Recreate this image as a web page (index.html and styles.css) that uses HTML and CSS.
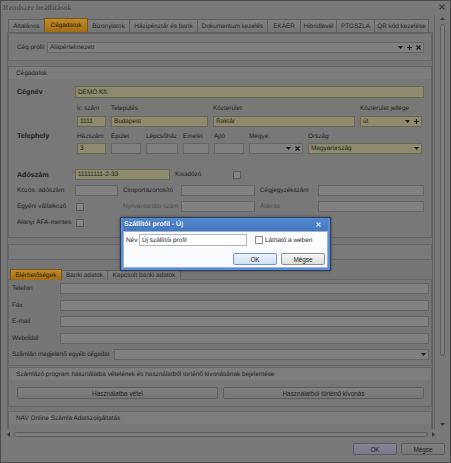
FILE: index.html
```html
<!DOCTYPE html>
<html lang="hu">
<head>
<meta charset="utf-8">
<title>Rendszer beállítások</title>
<link rel="stylesheet" href="styles.css">
</head>
<body>
<div class="window">
  <div class="titlebar">
    <span class="title">Rendszer beállítások</span>
    <svg class="wclose" viewBox="0 0 6 6" width="6" height="6"><path d="M0.6 0.6L5.4 5.4M5.4 0.6L0.6 5.4" stroke="#3a3a3a" stroke-width="1.3"/></svg>
  </div>
  <div class="main">
    <div class="viewport">
      <div class="tabs maintabs">
        <div class="tab t-alt">Általános</div>
        <div class="tab t-ceg active">Cégadatok</div>
        <div class="tab t-biz">Bizonylatok</div>
        <div class="tab t-haz">Házipénztár és bank</div>
        <div class="tab t-dok">Dokumentum kezelés</div>
        <div class="tab t-eka">EKÁER</div>
        <div class="tab t-hib">Hibridlevél</div>
        <div class="tab t-ptg">PTGSZLA</div>
        <div class="tab t-qr">QR kód kezelése</div>
      </div>
      <div class="tabpage">
        <div class="panel profil">
          <span class="lbl w30">Cég profil</span>
          <div class="field combo grow">
            <span>Alapértelmezett</span>
            <span class="icons">
              <svg class="ico" viewBox="0 0 5 3" width="5" height="3"><path d="M0 0H5L2.5 3z" fill="#1c1c1c"/></svg>
              <svg class="ico" viewBox="0 0 5 5" width="5" height="5"><path d="M1.9 0h1.2v1.9H5v1.2H3.1V5H1.9V3.1H0V1.9h1.9z" fill="#1c1c1c"/></svg>
              <svg class="ico" viewBox="0 0 5 5" width="5" height="5"><path d="M0.5 0.5L4.5 4.5M4.5 0.5L0.5 4.5" stroke="#1c1c1c" stroke-width="1.3"/></svg>
            </span>
          </div>
        </div>

        <div class="group ceg">
          <div class="ghead">Cégadatok</div>
          <div class="gbody">
            <div class="row cegnev">
              <span class="lbl b w58">Cégnév</span>
              <div class="field y grow">DEMÓ Kft.</div>
            </div>

            <div class="telephely">
              <span class="lbl b w60 tlbl">Telephely</span>
              <div class="addr">
                <div class="arow">
                  <div class="col c-ir"><span class="clbl">Ir. szám</span><div class="field y">1111</div></div>
                  <div class="col c-tel"><span class="clbl">Település</span><div class="field y">Budapest</div></div>
                  <div class="col c-koz"><span class="clbl">Közterület</span><div class="field y">Raktár</div></div>
                  <div class="col c-kj"><span class="clbl">Közterület jellege</span>
                    <div class="field y combo"><span>út</span><span class="icons">
                      <svg class="ico" viewBox="0 0 5 3" width="5" height="3"><path d="M0 0H5L2.5 3z" fill="#1c1c1c"/></svg>
                      <svg class="ico" viewBox="0 0 5 5" width="5" height="5"><path d="M1.9 0h1.2v1.9H5v1.2H3.1V5H1.9V3.1H0V1.9h1.9z" fill="#1c1c1c"/></svg>
                    </span></div>
                  </div>
                </div>
                <div class="arow brow">
                  <div class="col c-ir"><span class="clbl">Házszám</span><div class="field y">3</div></div>
                  <div class="col c-ep"><span class="clbl">Épület</span><div class="field"></div></div>
                  <div class="col c-lh"><span class="clbl">Lépcsőház</span><div class="field"></div></div>
                  <div class="col c-em"><span class="clbl">Emelet</span><div class="field"></div></div>
                  <div class="col c-aj"><span class="clbl">Ajtó</span><div class="field"></div></div>
                  <div class="col c-me"><span class="clbl">Megye</span>
                    <div class="field combo"><span></span><span class="icons">
                      <svg class="ico" viewBox="0 0 5 3" width="5" height="3"><path d="M0 0H5L2.5 3z" fill="#1c1c1c"/></svg>
                      <svg class="ico" viewBox="0 0 5 5" width="5" height="5"><path d="M0.5 0.5L4.5 4.5M4.5 0.5L0.5 4.5" stroke="#1c1c1c" stroke-width="1.3"/></svg>
                    </span></div>
                  </div>
                  <div class="col c-or"><span class="clbl">Ország</span>
                    <div class="field y combo"><span>Magyarország</span><span class="icons">
                      <svg class="ico" viewBox="0 0 5 3" width="5" height="3"><path d="M0 0H5L2.5 3z" fill="#1c1c1c"/></svg>
                    </span></div>
                  </div>
                </div>
              </div>
            </div>

            <div class="row adoszam">
              <span class="lbl b w58">Adószám</span>
              <div class="field y f-ado">11111111-2-33</div>
              <span class="lbl w58 ml5">Kisadózó</span>
              <span class="chk"></span>
            </div>

            <div class="extra">
              <span class="lbl">Közös. adószám</span>
              <div class="field"></div>
              <span></span>
              <span class="lbl">Csoportazonosító</span>
              <div class="field"></div>
              <span></span>
              <span class="lbl">Cégjegyzékszám</span>
              <div class="field"></div>

              <span class="lbl">Egyéni vállalkozó</span>
              <span class="chkcell"><span class="chk"></span></span>
              <span></span>
              <span class="lbl dis">Nyilvántartási szám</span>
              <div class="field"></div>
              <span></span>
              <span class="lbl dis">Aláírás</span>
              <div class="field"></div>

              <span class="lbl">Alanyi ÁFA-mentes</span>
              <span class="chkcell"><span class="chk"></span></span>
            </div>
          </div>
        </div>

        <div class="panel empty"></div>

        <div class="tabs subtabs">
          <div class="tab s-ele active">Elérhetőségek</div>
          <div class="tab s-ban">Banki adatok</div>
          <div class="tab s-kap">Kapcsolt banki adatok</div>
        </div>
        <div class="subpage">
          <div class="crow"><span class="lbl w48">Telefon</span><div class="field grow"></div></div>
          <div class="crow"><span class="lbl w48">Fax</span><div class="field grow"></div></div>
          <div class="crow"><span class="lbl w48">E-mail</span><div class="field grow"></div></div>
          <div class="crow"><span class="lbl w48">Weboldal</span><div class="field grow"></div></div>
          <div class="crow"><span class="lbl w102">Számlán megjelenő egyéb cégadat</span>
            <div class="field combo grow"><span></span><span class="icons">
              <svg class="ico" viewBox="0 0 5 3" width="5" height="3"><path d="M0 0H5L2.5 3z" fill="#1c1c1c"/></svg>
            </span></div>
          </div>
        </div>

        <div class="group szamlazo">
          <div class="ghead">Számlázó program használatba vételének és használatból történő kivonásának bejelentése</div>
          <div class="gbody btnrow">
            <button class="btn">Használatba vétel</button>
            <button class="btn">Használatból történő kivonás</button>
          </div>
        </div>

        <div class="group nav">
          <div class="ghead">NAV Online Számla Adatszolgáltatás</div>
          <div class="gbody navbody"></div>
        </div>
      </div>
    </div>
    <div class="vscroll">
      <svg class="sarrow" viewBox="0 0 5 3" width="5" height="3"><path d="M0 3H5L2.5 0z" fill="#3a3a3a"/></svg>
      <div class="vthumb"></div>
      <svg class="sarrow down" viewBox="0 0 5 3" width="5" height="3"><path d="M0 0H5L2.5 3z" fill="#3a3a3a"/></svg>
    </div>
  </div>
  <div class="hscroll">
    <svg class="harrow" viewBox="0 0 3 5" width="3" height="5"><path d="M3 0V5L0 2.5z" fill="#3a3a3a"/></svg>
    <div class="hthumb"></div>
    <svg class="harrow" viewBox="0 0 3 5" width="3" height="5"><path d="M0 0V5L3 2.5z" fill="#3a3a3a"/></svg>
  </div>
  <div class="bottombar">
    <button class="btn ok">OK</button>
    <button class="btn">Mégse</button>
  </div>
</div>

<div class="dialog">
  <div class="dtitle">
    <span>Szállítói profil - Új</span>
    <svg class="dclose" viewBox="0 0 5 5" width="5" height="5"><path d="M0.5 0.5L4.5 4.5M4.5 0.5L0.5 4.5" stroke="#d8e0ec" stroke-width="1.1"/></svg>
  </div>
  <div class="dbody">
    <div class="drow">
      <span class="dlbl">Név</span>
      <div class="dinput">Új szállítói profil</div>
      <span class="dchk"></span>
      <span class="dchklbl">Látható a weben</span>
    </div>
    <div class="dbtns">
      <button class="dbtn def">OK</button>
      <button class="dbtn">Mégse</button>
    </div>
  </div>
</div>
</body>
</html>
```

FILE: styles.css
```css
* { box-sizing: border-box; }
html, body { margin: 0; padding: 0; }
body {
  width: 451px; height: 463px; overflow: hidden; position: relative;
  background: #6c6c6c;
  font-family: "Liberation Sans", Arial, sans-serif;
  font-size: 6.4px; color: #222222;
  text-rendering: geometricPrecision;
}
button { font-family: inherit; font-size: inherit; color: inherit; margin: 0; }

.window {
  width: 451px; height: 463px;
  border: 1px solid #4b4b4b;
  background: #787878;
  display: flex; flex-direction: column;
}
.titlebar {
  height: 13px; display: flex; align-items: center; justify-content: space-between;
  padding: 0 5px 0 2px;
}
.title {
  font-family: "Liberation Serif", "Times New Roman", serif; font-weight: bold;
  font-size: 7.8px; color: #4c4c4c; text-shadow: 0 0 2px #8c8c8c;
}
.wclose { margin-top: -2px; }

.main { height: 414px; margin-top: 1px; display: flex; padding-left: 4px; }
.viewport { width: 429px; height: 414px; overflow: hidden; padding-left: 2px; }

.tabs { display: flex; align-items: flex-end; }
.maintabs { height: 17px; padding-left: 1px; }
.tab {
  height: 13px; display: flex; align-items: center; justify-content: center; white-space: nowrap;
  border: 1px solid #5f5f5f; border-bottom: none; margin-right: -1px; flex: none;
  background: linear-gradient(#808080, #767676); color: #262626;
}
.tab.active {
  height: 14px; position: relative; z-index: 1;
  background: linear-gradient(#c08a2a, #a26d14); border-color: #7b5614; color: #2a1b02;
}
.t-alt { width: 37px; }
.t-ceg { width: 44px; }
.t-biz { width: 43px; }
.t-haz { width: 69px; }
.t-dok { width: 71px; }
.t-eka { width: 34px; }
.t-hib { width: 37px; }
.t-ptg { width: 39px; }
.t-qr { width: 55px; }
.s-ele { width: 52px; }
.s-ban { width: 47px; }
.s-kap { width: 74px; }

.tabpage {
  width: 426px; height: 397px; border-left: 1px solid #606060; border-top: 1px solid #606060;
  border-right: 1px solid #606060; background: #767676;
}

.lbl { white-space: nowrap; flex: none; }
.lbl.b { font-weight: bold; font-size: 7.1px; color: #1c1c1c; }
.lbl.dis { color: #4e4e4e; }
.w30 { width: 30px; }
.w48 { width: 48px; }
.w58 { width: 58px; }
.w60 { width: 60px; }
.w102 { width: 102px; letter-spacing: -0.08px; }
.ml5 { margin-left: 5px; }
.grow { flex: 1; min-width: 0; }

.field {
  height: 11px; border: 1px solid #656565; background: #808080;
  padding: 0 2px; display: flex; align-items: center; white-space: nowrap; overflow: hidden;
}
.field.y { background: #8d8a6d; border-color: #696855; }
.combo .icons { margin-left: auto; display: flex; align-items: center; gap: 4px; }
.ico { display: block; }

.chk { display: block; width: 8px; height: 8px; border: 1px solid #5a5a5a; background: #848484; flex: none; }

.panel { border: 1px solid #666666; background: #797979; }
.profil { height: 28px; display: flex; align-items: center; padding: 0 7px 0 8px; }

.group { border: 1px solid #666666; background: #787878; }
.ghead {
  height: 12px; display: flex; align-items: center; padding-left: 7px;
  background: #7d7d7d; white-space: nowrap;
}
.gbody { padding: 0 7px 0 8px; }

.ceg { margin-top: 5px; }
.ceg .gbody { padding-bottom: 9px; }
.row { display: flex; align-items: center; }
.cegnev { margin-top: 7px; height: 12px; }
.cegnev .field { height: 12px; }

.telephely { display: flex; margin-top: 7px; }
.tlbl { padding-top: 27px; }
.addr { display: flex; flex-direction: column; }
.arow { display: flex; gap: 5px; }
.brow { margin-top: 6px; }
.col { display: flex; flex-direction: column; }
.clbl { height: 8px; line-height: 8px; white-space: nowrap; margin-bottom: 3px; }
.brow .clbl { margin-bottom: 2px; }
.c-ir { width: 29px; }
.c-tel { width: 97px; }
.c-koz { width: 142px; }
.c-kj { width: 62px; }
.c-ep { width: 30px; }
.c-lh { width: 32px; }
.c-em { width: 26px; }
.c-aj { width: 30px; }
.c-me { width: 54px; }
.c-or { width: 114px; }

.adoszam { margin-top: 15px; height: 11px; }
.f-ado { width: 95px; }

.extra {
  margin-top: 5px; display: grid;
  grid-template-columns: 58px 43px 5px 58px 74px 5px 58px 1fr;
  grid-auto-rows: 11px; row-gap: 5px; align-items: center;
}
.chkcell { padding-left: 1px; }

.empty { margin-top: 6px; height: 16px; }

.subtabs { margin-top: 9px; height: 11px; padding-left: 2px; }
.subtabs .tab { height: 10px; }
.subtabs .tab.active { height: 11px; }

.subpage {
  border: 1px solid #666666; padding: 3px 2px 5px 3px; background: #767676;
  display: flex; flex-direction: column; gap: 5.5px; margin-top: -1px;
}
.crow { display: flex; align-items: center; height: 11px; }

.szamlazo { margin-top: 1px; }
.btnrow { display: flex; gap: 5px; padding-top: 7px; padding-bottom: 7px; }
.btn {
  height: 12px; border: 1px solid #5d5d5d; border-radius: 2px;
  background: linear-gradient(#808080, #777777); padding: 0;
  display: flex; align-items: center; justify-content: center;
}
.btnrow .btn { flex: 1; }
.nav { margin-top: 4px; }
.navbody { height: 20px; }

.vscroll {
  width: 13px; height: 414px; border-left: 1px solid #656565;
  display: flex; flex-direction: column; align-items: center; padding-top: 2px; padding-left: 3px;
}
.sarrow { display: block; flex: none; }
.vthumb {
  margin-top: 4px; width: 5px; height: 332px; border: 1px solid #5a5a5a; border-radius: 3px;
  background: #7d7d7d;
}
.sarrow.down { margin-top: auto; margin-bottom: 3px; }

.hscroll {
  height: 10px; width: 431px; margin-left: 4px; display: flex; align-items: center;
  padding: 0 1px 0 2px; gap: 4px;
}
.harrow { display: block; flex: none; }
.hthumb { flex: 1; height: 5px; border: 1px solid #5a5a5a; border-radius: 3px; background: #7d7d7d; }

.bottombar {
  display: flex; justify-content: flex-end; gap: 4px; padding: 4px 5px 0 0;
}
.bottombar .btn { width: 44px; }
.bottombar .btn.ok { background: linear-gradient(#828693, #767a86); border-color: #555c6c; }

/* modal dialog */
.dialog {
  position: absolute; left: 120px; top: 217px; width: 211px;
  border: 1px solid #2b3f5c; background: #5c8ed3; padding: 0 2px 2px 2px;
  box-shadow: 0 0 3px rgba(0,0,0,0.4);
}
.dtitle {
  height: 13px; display: flex; align-items: center; justify-content: space-between;
  padding: 0 7px 0 1px;
  background: linear-gradient(#5289cf, #4477be);
  color: #ffffff; font-weight: bold; font-size: 7px;
  text-shadow: 0 0 2px rgba(20,40,80,0.6);
}
.dbody {
  background: #fbfcfe; border: 1px solid #9fb3cf; padding: 2px; color: #1e1e1e;
}
.drow { display: flex; align-items: center; height: 12px; }
.dlbl { width: 13px; flex: none; }
.dinput {
  width: 108px; height: 12px; border: 1px solid #abb7c8; background: #ffffff;
  padding: 0 2px; display: flex; align-items: center; white-space: nowrap;
}
.dchk {
  width: 8px; height: 8px; margin-left: 8px; border: 1px solid #8e8f8f;
  background: linear-gradient(#f2f2f2, #ffffff);
}
.dchklbl { margin-left: 2px; white-space: nowrap; }
.dbtns { display: flex; justify-content: flex-end; gap: 4px; margin-top: 7px; }
.dbtn {
  width: 44px; height: 12px; padding: 0; border: 1px solid #8e8f8f; border-radius: 2px;
  background: linear-gradient(#f7f7f7, #dedede);
  display: flex; align-items: center; justify-content: center;
}
.dbtn.def { border-color: #6f96cc; background: linear-gradient(#edf3fd, #d2e1f7); }
```
